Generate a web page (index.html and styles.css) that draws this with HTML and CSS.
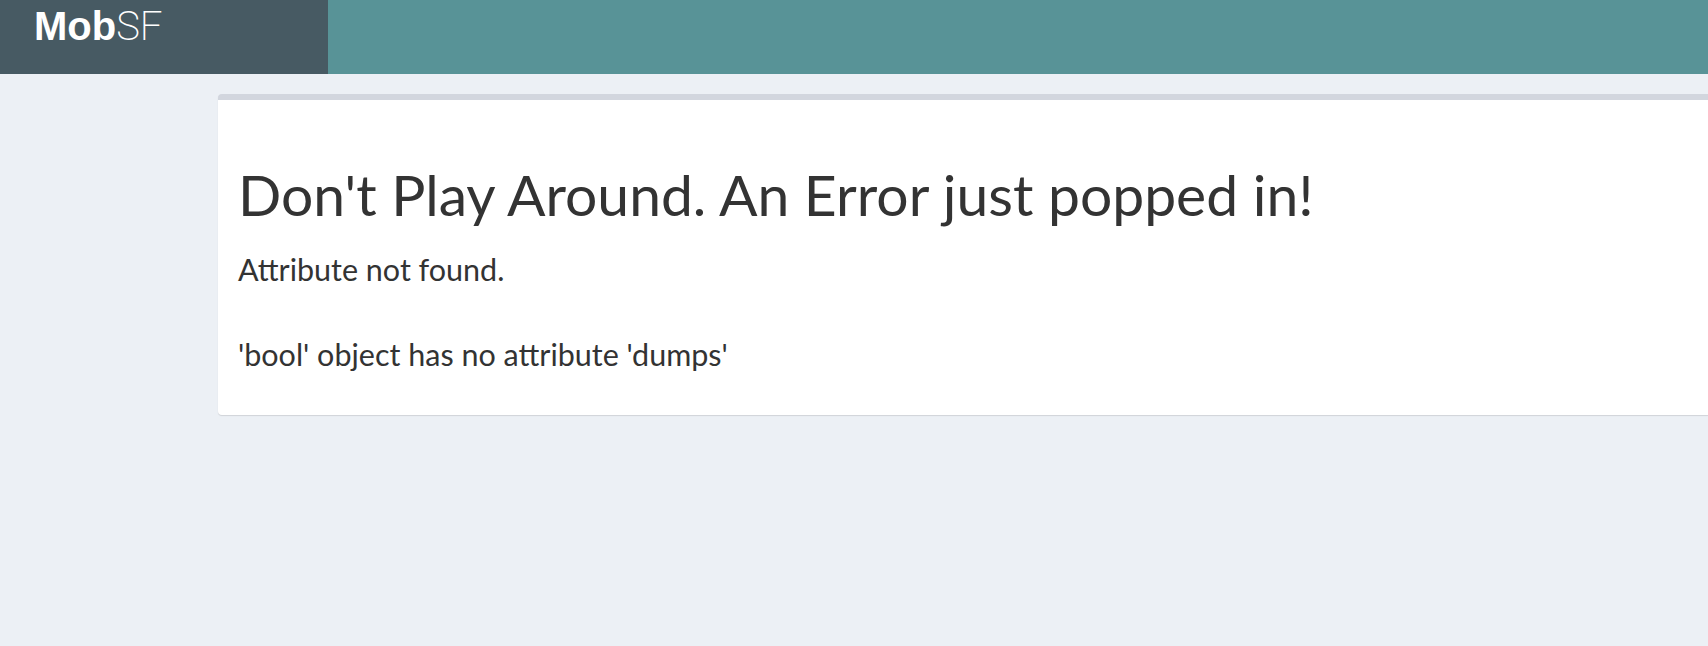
FILE: index.html
```html
<!DOCTYPE html>
<html lang="en">
<head>
<meta charset="utf-8">
<title>MobSF - Error</title>
<link rel="stylesheet" href="styles.css">
</head>
<body>
<header class="topbar">
  <div class="brand"><span class="brand-bold">Mob</span><span class="brand-light">SF</span></div>
  <div class="navbar"></div>
</header>
<main class="content">
  <section class="box">
    <h1 class="box-title">Don't Play Around. An Error just popped in!</h1>
    <p class="box-text">Attribute not found.<br><br>'bool' object has no attribute 'dumps'</p>
  </section>
</main>
</body>
</html>
```

FILE: styles.css
```css
html, body {
  margin: 0;
  padding: 0;
}
body {
  background: #ecf0f5;
  font-family: "Lato", "Noto Sans", sans-serif;
  color: #333333;
  min-height: 646px;
}
.topbar {
  display: flex;
  height: 74px;
}
.brand {
  width: 328px;
  flex: none;
  background: #475a63;
  color: #ffffff;
  padding-left: 34px;
  box-sizing: border-box;
  font-size: 40px;
  line-height: 50px;
}
.brand-bold {
  font-family: "Liberation Sans", Arial, sans-serif;
  font-weight: 700;
}
.brand-light {
  font-family: "Roboto", "Liberation Sans", sans-serif;
  font-weight: 200;
}
.navbar {
  flex: 1;
  background: #589397;
}
.content {
  padding: 20px 0 0 218px;
}
.box {
  background: #ffffff;
  border-top: 6px solid #d2d6de;
  border-radius: 4px 0 0 4px;
  box-shadow: 0 1px 1px rgba(0,0,0,0.12);
  padding: 49px 20px 39px 20px;
}
.box-title {
  margin: 0 0 9px 0;
  font-weight: 400;
  font-size: 57px;
  line-height: 90px;
}
.box-text {
  margin: 0;
  font-size: 30.5px;
  line-height: 42.5px;
}
```
